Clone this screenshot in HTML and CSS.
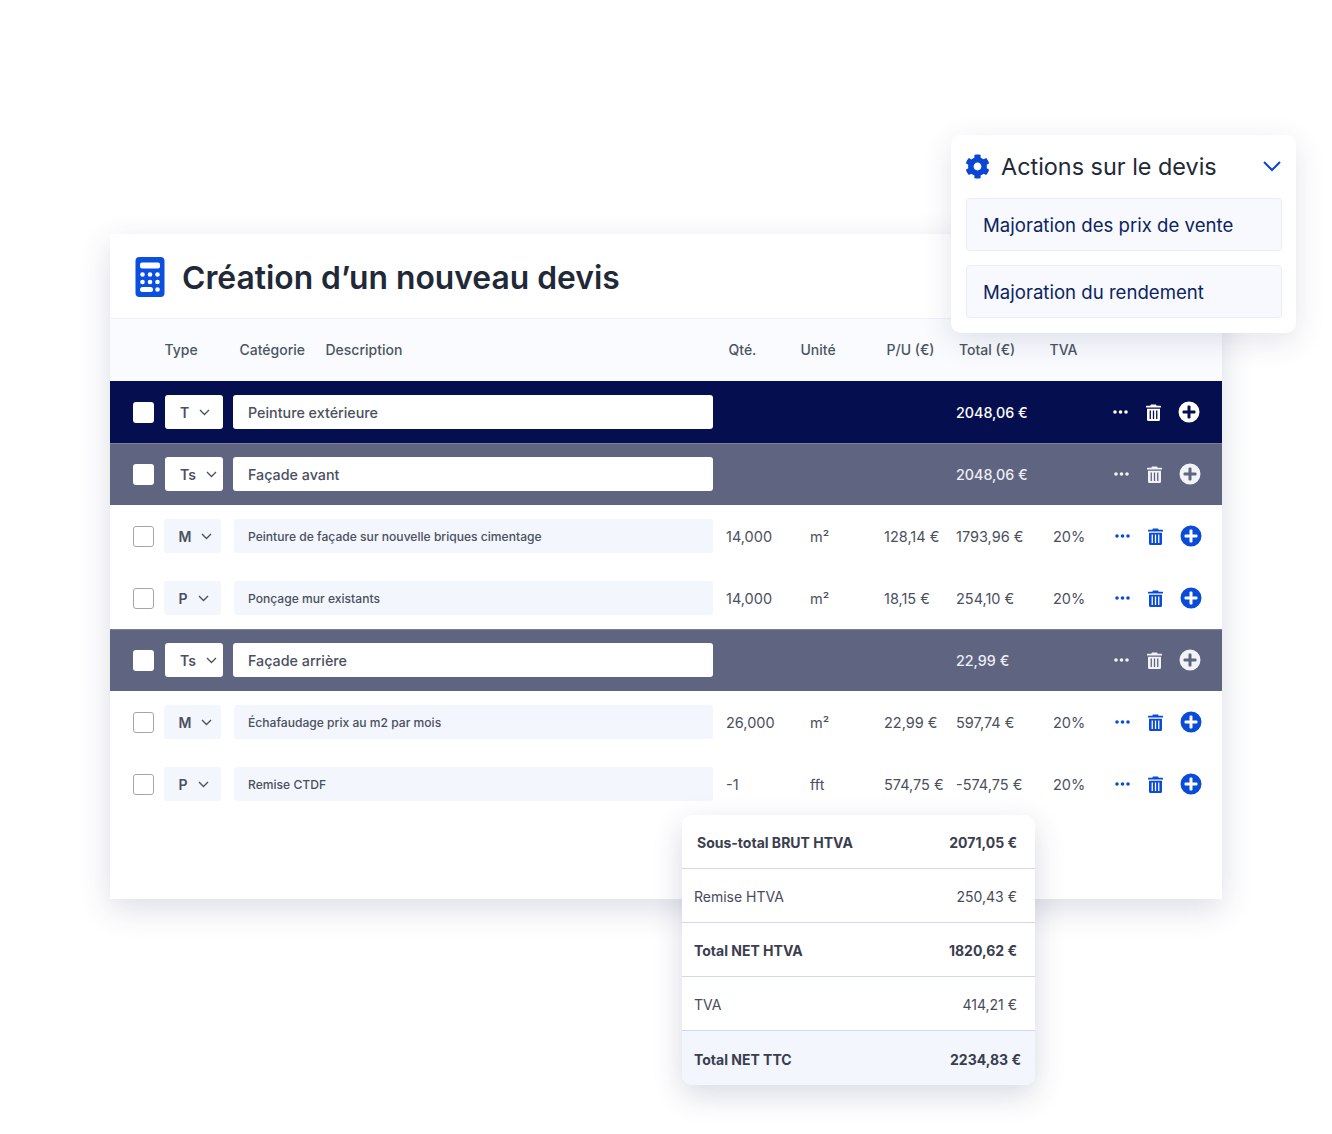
FILE: index.html
```html
<!DOCTYPE html>
<html lang="fr">
<head>
    <meta charset="UTF-8">
    <meta name="viewport" content="width=device-width, initial-scale=1.0">
    <title>Création d'un nouveau devis</title>
    <link rel="stylesheet" href="styles.css">
</head>
<body>
    <svg class="sprites" width="0" height="0">
        <symbol id="i-dots" viewBox="0 0 15 4">
            <circle cx="2" cy="2" r="1.8"/><circle cx="7.5" cy="2" r="1.8"/><circle cx="13" cy="2" r="1.8"/>
        </symbol>
        <symbol id="i-trash" viewBox="0 0 15 17">
            <path d="M5 0.4h5l.7 1.4h3.8a.5.5 0 0 1 .5.5v1.2H0V2.3a.5.5 0 0 1 .5-.5h3.8z"/>
            <path fill-rule="evenodd" d="M1 4.8h13v10.6a1.5 1.5 0 0 1-1.5 1.5h-10A1.5 1.5 0 0 1 1 15.4zM3.6 6.6v8.4h1.3V6.6zM6.85 6.6v8.4h1.3V6.6zM10.1 6.6v8.4h1.3V6.6z"/>
        </symbol>
        <symbol id="i-plus" viewBox="0 0 22 22">
            <path fill-rule="evenodd" d="M11 .5a10.5 10.5 0 1 1 0 21 10.5 10.5 0 0 1 0-21zM9.5 5.5v4h-4a1 1 0 0 0-1 1v1a1 1 0 0 0 1 1h4v4a1 1 0 0 0 1 1h1a1 1 0 0 0 1-1v-4h4a1 1 0 0 0 1-1v-1a1 1 0 0 0-1-1h-4v-4a1 1 0 0 0-1-1h-1a1 1 0 0 0-1 1z"/>
        </symbol>
        <symbol id="i-chev" viewBox="0 0 11 7">
            <path d="M1 1l4.5 4.5L10 1" fill="none" stroke="currentColor" stroke-width="1.4"/>
        </symbol>
    </svg>

    <div class="stage">
        <div class="card">
            <div class="card-head">
                <svg class="calc" viewBox="0 0 29 40">
                    <rect width="29" height="40" rx="4" fill="#0a4fe0"/>
                    <rect x="4.5" y="5.5" width="20" height="6" rx="2" fill="#fff"/>
                    <g fill="#fff">
                        <circle cx="7" cy="17.5" r="2.3"/><circle cx="14.5" cy="17.5" r="2.3"/><circle cx="22" cy="17.5" r="2.3"/>
                        <circle cx="7" cy="25" r="2.3"/><circle cx="14.5" cy="25" r="2.3"/><circle cx="22" cy="25" r="2.3"/>
                    </g>
                    <rect x="4.5" y="30" width="13" height="5" rx="2.5" fill="#fff"/>
                    <circle cx="22" cy="32.5" r="2.3" fill="#fff"/>
                </svg>
                <h1>Création d’un nouveau devis</h1>
            </div>

            <div class="thead">
                <span class="th-type">Type</span>
                <span class="th-cat">Catégorie</span>
                <span class="th-desc">Description</span>
                <span class="th-qty">Qté.</span>
                <span class="th-unit">Unité</span>
                <span class="th-pu">P/U (€)</span>
                <span class="th-total">Total (€)</span>
                <span class="th-tva">TVA</span>
            </div>

            <div class="row row-title">
                <span class="check"></span>
                <div class="sel"><b>T</b><svg class="chev"><use href="#i-chev"/></svg></div>
                <div class="field">Peinture extérieure</div>
                <span></span><span></span><span></span>
                <span class="total">2048,06 €</span>
                <span></span>
                <div class="actions">
                    <svg class="dots"><use href="#i-dots"/></svg>
                    <svg class="trash"><use href="#i-trash"/></svg>
                    <svg class="plus"><use href="#i-plus"/></svg>
                </div>
            </div>

            <div class="row row-sub">
                <span class="check"></span>
                <div class="sel"><b>Ts</b><svg class="chev"><use href="#i-chev"/></svg></div>
                <div class="field">Façade avant</div>
                <span></span><span></span><span></span>
                <span class="total">2048,06 €</span>
                <span></span>
                <div class="actions">
                    <svg class="dots"><use href="#i-dots"/></svg>
                    <svg class="trash"><use href="#i-trash"/></svg>
                    <svg class="plus"><use href="#i-plus"/></svg>
                </div>
            </div>

            <div class="row row-item">
                <span class="check"></span>
                <div class="sel"><b>M</b><svg class="chev"><use href="#i-chev"/></svg></div>
                <div class="field">Peinture de façade sur nouvelle briques cimentage</div>
                <span>14,000</span>
                <span>m²</span>
                <span>128,14 €</span>
                <span>1793,96 €</span>
                <span>20%</span>
                <div class="actions">
                    <svg class="dots"><use href="#i-dots"/></svg>
                    <svg class="trash"><use href="#i-trash"/></svg>
                    <svg class="plus"><use href="#i-plus"/></svg>
                </div>
            </div>

            <div class="row row-item">
                <span class="check"></span>
                <div class="sel"><b>P</b><svg class="chev"><use href="#i-chev"/></svg></div>
                <div class="field">Ponçage mur existants</div>
                <span>14,000</span>
                <span>m²</span>
                <span>18,15 €</span>
                <span>254,10 €</span>
                <span>20%</span>
                <div class="actions">
                    <svg class="dots"><use href="#i-dots"/></svg>
                    <svg class="trash"><use href="#i-trash"/></svg>
                    <svg class="plus"><use href="#i-plus"/></svg>
                </div>
            </div>

            <div class="row row-sub">
                <span class="check"></span>
                <div class="sel"><b>Ts</b><svg class="chev"><use href="#i-chev"/></svg></div>
                <div class="field">Façade arrière</div>
                <span></span><span></span><span></span>
                <span class="total">22,99 €</span>
                <span></span>
                <div class="actions">
                    <svg class="dots"><use href="#i-dots"/></svg>
                    <svg class="trash"><use href="#i-trash"/></svg>
                    <svg class="plus"><use href="#i-plus"/></svg>
                </div>
            </div>

            <div class="row row-item">
                <span class="check"></span>
                <div class="sel"><b>M</b><svg class="chev"><use href="#i-chev"/></svg></div>
                <div class="field">Échafaudage prix au m2 par mois</div>
                <span>26,000</span>
                <span>m²</span>
                <span>22,99 €</span>
                <span>597,74 €</span>
                <span>20%</span>
                <div class="actions">
                    <svg class="dots"><use href="#i-dots"/></svg>
                    <svg class="trash"><use href="#i-trash"/></svg>
                    <svg class="plus"><use href="#i-plus"/></svg>
                </div>
            </div>

            <div class="row row-item">
                <span class="check"></span>
                <div class="sel"><b>P</b><svg class="chev"><use href="#i-chev"/></svg></div>
                <div class="field">Remise CTDF</div>
                <span>-1</span>
                <span>fft</span>
                <span>574,75 €</span>
                <span>-574,75 €</span>
                <span>20%</span>
                <div class="actions">
                    <svg class="dots"><use href="#i-dots"/></svg>
                    <svg class="trash"><use href="#i-trash"/></svg>
                    <svg class="plus"><use href="#i-plus"/></svg>
                </div>
            </div>
        </div>

        <div class="panel">
            <div class="panel-head">
                <svg class="gear" viewBox="0 0 512 512"><path d="M487.4 315.7l-42.6-24.6c4.3-23.2 4.3-47 0-70.2l42.6-24.6c4.9-2.8 7.1-8.6 5.5-14-11.1-35.6-30-67.8-54.7-94.6-3.8-4.1-10-5.1-14.8-2.3L380.8 110c-17.9-15.4-38.5-27.3-60.8-35.1V25.8c0-5.6-3.9-10.5-9.4-11.7-36.7-8.2-74.3-7.8-109.2 0-5.5 1.2-9.4 6.1-9.4 11.7V75c-22.2 7.9-42.8 19.8-60.8 35.1L88.7 85.5c-4.9-2.8-11-1.9-14.8 2.3-24.7 26.7-43.6 58.9-54.7 94.6-1.7 5.4.6 11.2 5.5 14L67.3 221c-4.3 23.2-4.3 47 0 70.2l-42.6 24.6c-4.9 2.8-7.1 8.6-5.5 14 11.1 35.6 30 67.8 54.7 94.6 3.8 4.1 10 5.1 14.8 2.3l42.6-24.6c17.9 15.4 38.5 27.3 60.8 35.1v49.2c0 5.6 3.9 10.5 9.4 11.7 36.7 8.2 74.3 7.8 109.2 0 5.5-1.2 9.4-6.1 9.4-11.7v-49.2c22.2-7.9 42.8-19.8 60.8-35.1l42.6 24.6c4.9 2.8 11 1.9 14.8-2.3 24.7-26.7 43.6-58.9 54.7-94.6 1.5-5.5-.7-11.3-5.6-14.1zM256 336c-44.1 0-80-35.9-80-80s35.9-80 80-80 80 35.9 80 80-35.9 80-80 80z"/></svg>
                <span class="panel-title">Actions sur le devis</span>
                <svg class="panel-chev" viewBox="0 0 18 11"><path d="M1 1l8 8 8-8" fill="none" stroke="currentColor" stroke-width="2"/></svg>
            </div>
            <div class="panel-btn">Majoration des prix de vente</div>
            <div class="panel-btn">Majoration du rendement</div>
        </div>

        <div class="totals">
            <div class="line strong first"><span>Sous-total BRUT HTVA</span><span>2071,05 €</span></div>
            <div class="line"><span>Remise HTVA</span><span>250,43 €</span></div>
            <div class="line strong"><span>Total NET HTVA</span><span>1820,62 €</span></div>
            <div class="line"><span>TVA</span><span>414,21 €</span></div>
            <div class="line strong last"><span>Total NET TTC</span><span>2234,83 €</span></div>
        </div>
    </div>
</body>
</html>
```

FILE: styles.css
```css
body {
    margin: 0;
    background-color: #fff;
    font-family: Inter, Arial, sans-serif;
    color: #4b5060;
}
.sprites {
    position: absolute;
}
.stage {
    position: relative;
    height: 1134px;
    overflow: hidden;
    padding-top: 234px;
    box-sizing: border-box;
}
.card {
    width: 1112px;
    height: 665px;
    margin-left: 110px;
    background-color: #fff;
    box-shadow: 0 10px 30px rgba(40, 50, 100, 0.16);
}
.card-head {
    display: flex;
    align-items: center;
    gap: 17px;
    height: 85px;
    padding-left: 25px;
    box-sizing: border-box;
    border-bottom: 1px solid #eef1f7;
}
.calc {
    width: 30px;
    height: 40px;
    margin-top: 1px;
}
h1 {
    margin: 2px 0 0;
    font-size: 31.8px;
    font-weight: 600;
    color: #1f2937;
}
.thead {
    position: relative;
    display: flex;
    align-items: center;
    height: 62px;
    padding-bottom: 1px;
    box-sizing: border-box;
    background-color: #f9fbfe;
    font-size: 14px;
    font-weight: 500;
    color: #4b5563;
}
.thead span {
    position: absolute;
}
.th-type { left: 54.5px; }
.th-cat { left: 129.5px; }
.th-desc { left: 215.5px; }
.th-qty { left: 618.5px; }
.th-unit { left: 690.5px; }
.th-pu { left: 776.5px; }
.th-total { left: 849px; }
.th-tva { left: 939.5px; }

.row {
    display: grid;
    grid-template-columns: 31px 69px 493px 84px 74px 72px 97px 62px 1fr;
    align-items: center;
    height: 62px;
    padding-left: 23px;
    box-sizing: border-box;
    font-size: 14.5px;
    color: #4b5060;
}
.check {
    width: 21px;
    height: 21px;
    box-sizing: border-box;
    border-radius: 3px;
    background-color: #fff;
}
.sel {
    display: flex;
    align-items: center;
    gap: 10px;
    width: 58px;
    height: 34px;
    padding-left: 15px;
    box-sizing: border-box;
    border-radius: 3px;
    font-size: 14px;
}
.sel b {
    font-weight: 600;
}
.chev {
    width: 11px;
    height: 7px;
    color: #4b5563;
}
.field {
    display: flex;
    align-items: center;
    width: 480px;
    height: 34px;
    padding-left: 15px;
    box-sizing: border-box;
    border-radius: 3px;
    background-color: #fff;
    font-weight: 500;
    font-size: 14.3px;
}
.total {
    color: #fff;
    font-weight: 500;
    font-size: 14.3px;
    white-space: nowrap;
}
.row-title {
    background-color: #050f4f;
}
.row-sub {
    background-color: #5f6480;
    box-shadow: inset 0 1px 0 #7a7e96;
}
.row-sub .total {
    color: #eceef5;
}
.row-title .sel,
.row-sub .sel {
    margin-left: 1px;
    background-color: #fff;
}
.row-item .check {
    border: 1.5px solid #a3a6ad;
}
.row-item .sel {
    width: 57px;
    padding-left: 14.5px;
    background-color: #f3f6fd;
}
.row-item .field {
    margin-left: 1px;
    width: 479px;
    padding-left: 14px;
    background-color: #f3f6fd;
    font-size: 12.1px;
}
.row-item span {
    white-space: nowrap;
}
.actions {
    display: flex;
    align-items: center;
    fill: #fff;
    margin-left: -2px;
}
.row-sub .actions {
    margin-left: -1px;
    fill: #f2f3f8;
}
.row-item .actions {
    margin-left: 0;
    fill: #0a4bd8;
}
.dots {
    width: 15px;
    height: 4px;
}
.trash {
    width: 15px;
    height: 17px;
    margin-left: 18px;
}
.plus {
    width: 22px;
    height: 22px;
    margin-left: 17px;
}

.panel {
    position: absolute;
    left: 951px;
    top: 135px;
    width: 345px;
    height: 198px;
    padding: 0 14px 0 15px;
    box-sizing: border-box;
    border-radius: 10px;
    background-color: #fff;
    box-shadow: 0 8px 30px rgba(40, 50, 100, 0.13);
}
.panel-head {
    display: flex;
    align-items: center;
    height: 63px;
    margin-left: -1px;
}
.gear {
    width: 25px;
    height: 25px;
    fill: #0a45d6;
}
.panel-title {
    margin-left: 11px;
    font-size: 23.4px;
    color: #1f2937;
}
.panel-chev {
    width: 18px;
    height: 11px;
    margin-left: auto;
    margin-right: 1px;
    color: #0a45d6;
}
.panel-btn {
    display: flex;
    align-items: center;
    height: 53px;
    margin-bottom: 14px;
    padding-left: 16px;
    box-sizing: border-box;
    border: 1px solid #e9edf8;
    border-radius: 4px;
    background-color: #f7f9fe;
    font-size: 18.6px;
    color: #0c2461;
}

.totals {
    position: absolute;
    left: 682px;
    top: 815px;
    width: 353px;
    border-radius: 10px;
    overflow: hidden;
    background-color: #fff;
    box-shadow: 0 10px 30px rgba(40, 50, 100, 0.18);
}
.line {
    display: flex;
    justify-content: space-between;
    align-items: center;
    height: 54px;
    padding: 2px 18px 0 12px;
    box-sizing: border-box;
    border-bottom: 1px solid #d3d9ea;
    font-size: 14px;
    color: #474b5a;
}
.line.strong {
    font-weight: 700;
    color: #3a3e4e;
}
.line.first {
    padding-left: 15px;
}
.line.last {
    padding-right: 14px;
    border-bottom: none;
    background-color: #f3f6fd;
}
```
